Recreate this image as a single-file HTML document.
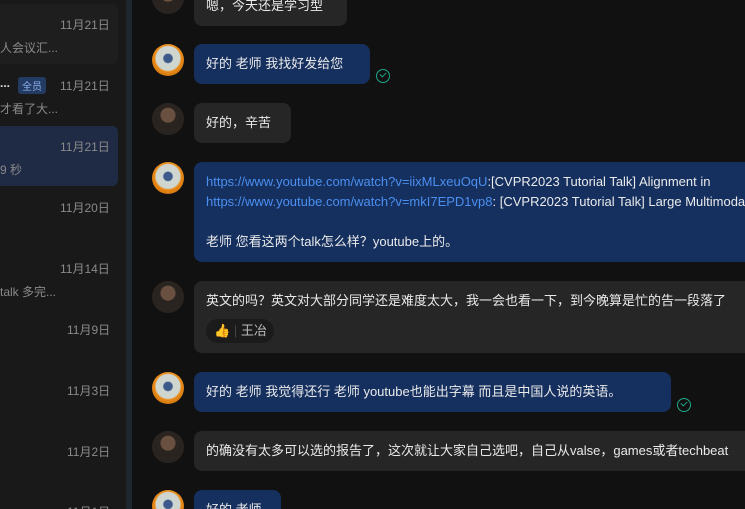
<!DOCTYPE html><html><head><meta charset="utf-8"><style>
*{margin:0;padding:0;box-sizing:border-box}
html,body{width:745px;height:509px;overflow:hidden}
body{background:#111;font-family:"Liberation Sans","Noto Sans CJK SC",sans-serif;position:relative;color:#e6e6e6}
.side{position:absolute;left:0;top:0;width:126px;height:509px;background:#191919}
.div{position:absolute;left:126px;top:0;width:6px;height:509px;background:#1d272d}
.a{position:absolute;font-size:12px;color:#8a8a8a;white-space:nowrap}
.card{position:absolute;left:-10px;width:128px;border-radius:6px}
.av{position:absolute;left:152px;width:32px;height:32px;border-radius:50%}
.p{background:radial-gradient(circle at 50% 38%,#6a5040 0 28%,#2a2420 31%);}
.t{background:radial-gradient(circle at 50% 45%,#3d5a8a 0 18%,#cfd6d0 22% 50%,#e98a17 56%,#b35d08 100%);}
.b{position:absolute;left:194px;border-radius:8px;font-size:13px;line-height:20px;padding:10px 12px;white-space:nowrap;overflow:hidden;color:#eaeaea}
.bl{background:#15305f}.gr{background:#262626}
.lk{color:#4b8ff0}
.ck{position:absolute;width:14px;height:14px;border:1.5px solid #1fa889;border-radius:50%}
.ck:after{content:"";position:absolute;left:3px;top:2px;width:5px;height:3px;border-left:1.5px solid #1fa889;border-bottom:1.5px solid #1fa889;transform:rotate(-45deg)}
</style></head><body>
<div class="side"></div>
<div class="card" style="top:4px;height:60px;background:#1e1e1e"></div>
<div class="card" style="top:126px;height:60px;background:#1f2b45"></div>
<div class="a" style="left:60px;top:16px">11月21日</div>
<div class="a" style="left:0;top:39px">人会议汇...</div>
<div class="a" style="left:0;top:76px;color:#ddd;font-weight:bold">...</div>
<div class="a" style="left:18px;top:77px;background:#233a63;color:#8fb4f0;font-size:10px;padding:1px 4px;border-radius:3px">全员</div>
<div class="a" style="left:60px;top:77px">11月21日</div>
<div class="a" style="left:0;top:100px">才看了大...</div>
<div class="a" style="left:60px;top:138px">11月21日</div>
<div class="a" style="left:0;top:161px">9 秒</div>
<div class="a" style="left:60px;top:199px">11月20日</div>
<div class="a" style="left:60px;top:260px">11月14日</div>
<div class="a" style="left:0;top:283px">talk 多完...</div>
<div class="a" style="left:67px;top:321px">11月9日</div>
<div class="a" style="left:67px;top:382px">11月3日</div>
<div class="a" style="left:67px;top:443px">11月2日</div>
<div class="a" style="left:67px;top:503px">11月1日</div>
<div class="div"></div>

<div class="av p" style="top:-18px"></div>
<div class="b gr" style="top:-16px;width:153px;padding-top:12px">嗯，今天还是学习型</div>
<div class="av t" style="top:44px"></div>
<div class="b bl" style="top:44px;width:176px">好的 老师 我找好发给您</div>
<div class="ck" style="left:376px;top:69px"></div>
<div class="av p" style="top:103px"></div>
<div class="b gr" style="top:103px;width:97px">好的，辛苦</div>
<div class="av t" style="top:162px"></div>
<div class="b bl" style="top:162px;width:570px;height:100px"><span class="lk">https://www.youtube.com/watch?v=iixMLxeuOqU</span>:[CVPR2023 Tutorial Talk] Alignment in<br><span class="lk">https://www.youtube.com/watch?v=mkI7EPD1vp8</span>: [CVPR2023 Tutorial Talk] Large Multimodal<br><br>老师 您看这两个talk怎么样？youtube上的。</div>
<div class="av p" style="top:281px"></div>
<div class="b gr" style="top:281px;width:570px;height:72px">英文的吗？英文对大部分同学还是难度太大，我一会也看一下，到今晚算是忙的告一段落了</div>
<div style="position:absolute;left:206px;top:319px;width:68px;height:24px;background:#1b1b1b;border-radius:12px;font-size:13px;line-height:24px;color:#bbb;padding-left:8px;white-space:nowrap">👍 <span style="color:#444">|</span> 王冶</div>
<div class="av t" style="top:372px"></div>
<div class="b bl" style="top:372px;width:477px">好的 老师 我觉得还行 老师 youtube也能出字幕 而且是中国人说的英语。</div>
<div class="ck" style="left:677px;top:398px"></div>
<div class="av p" style="top:431px"></div>
<div class="b gr" style="top:431px;width:570px">的确没有太多可以选的报告了，这次就让大家自己选吧，自己从valse，games或者techbeat</div>
<div class="av t" style="top:490px"></div>
<div class="b bl" style="top:490px;width:87px;height:19px;border-radius:8px 8px 0 0">好的 老师</div>
</body></html>
